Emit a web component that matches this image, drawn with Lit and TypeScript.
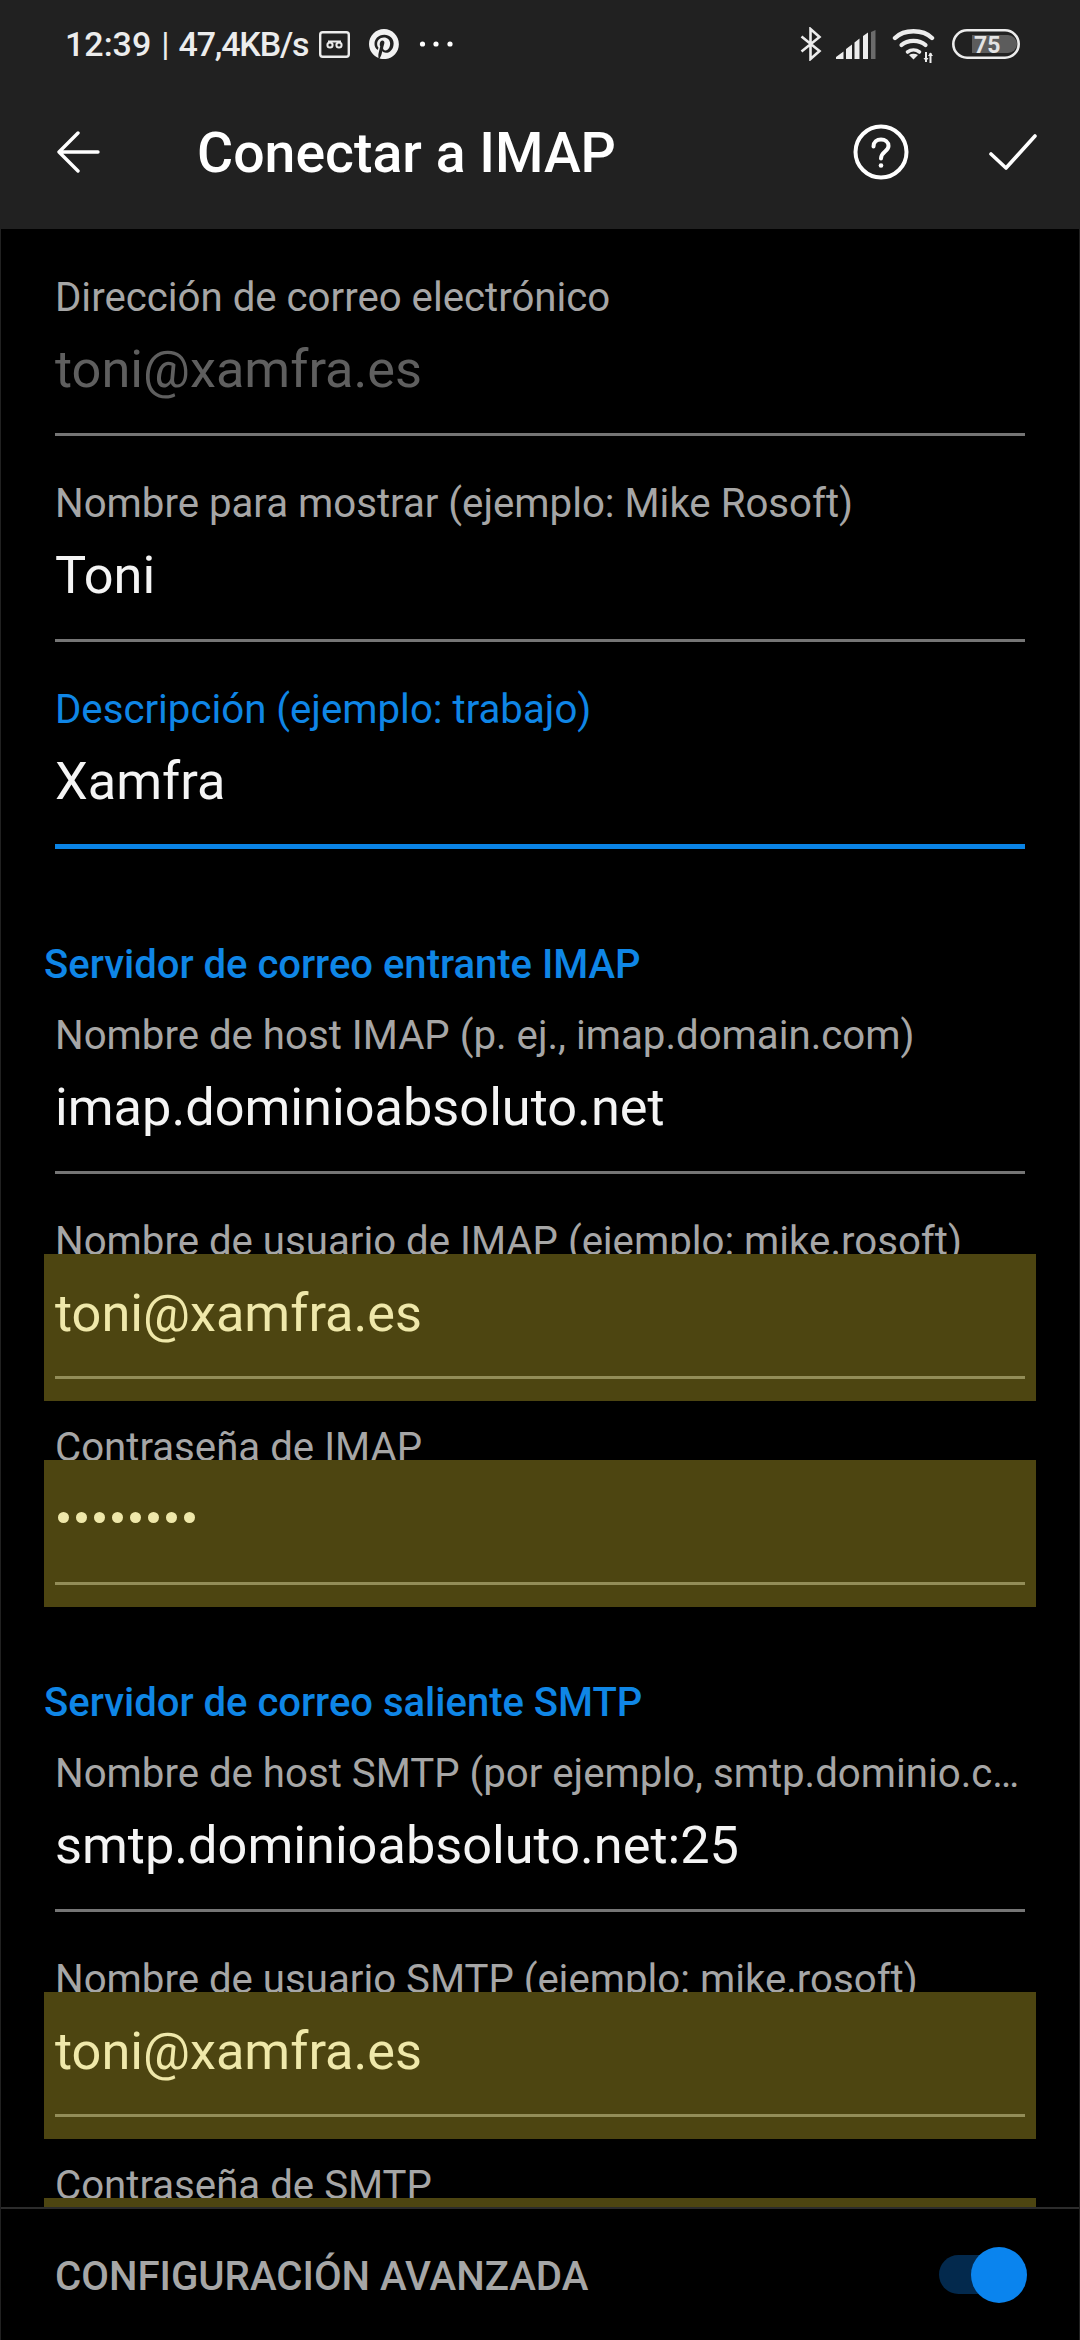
import { LitElement, html, css } from "lit";
import { customElement } from "lit/decorators.js";

type Field = { label: string; value: string; kind?: "dim" | "focus" | "fill" | "pass" };

const ACCOUNT: Field[] = [
  { label: "Dirección de correo electrónico", value: "toni@xamfra.es", kind: "dim" },
  { label: "Nombre para mostrar (ejemplo: Mike Rosoft)", value: "Toni" },
  { label: "Descripción (ejemplo: trabajo)", value: "Xamfra", kind: "focus" },
];
const IMAP: Field[] = [
  { label: "Nombre de host IMAP (p. ej., imap.domain.com)", value: "imap.dominioabsoluto.net" },
  { label: "Nombre de usuario de IMAP (ejemplo: mike.rosoft)", value: "toni@xamfra.es", kind: "fill" },
  { label: "Contraseña de IMAP", value: "••••••••", kind: "pass" },
];
const SMTP: Field[] = [
  { label: "Nombre de host SMTP (por ejemplo, smtp.dominio.c…", value: "smtp.dominioabsoluto.net:25" },
  { label: "Nombre de usuario SMTP (ejemplo: mike.rosoft)", value: "toni@xamfra.es", kind: "fill" },
  { label: "Contraseña de SMTP", value: "••••••••", kind: "pass" },
];

@customElement("app-root")
export class AppRoot extends LitElement {
  static styles = css`
    :host { display: block; width: 1080px; height: 2340px; background: #000; font-family: Roboto, "Liberation Sans", sans-serif; overflow: hidden; }
    .page { width: 1080px; height: 2340px; display: flex; flex-direction: column; }
    .top { background: #212121; height: 229px; flex: none; display: flex; flex-direction: column; }
    .status { height: 88px; flex: none; display: flex; align-items: center; padding: 0 60px 0 65px; color: #ececec; font-size: 34px; font-weight: 500; }
    .status .txt { white-space: pre; }
    .status .sep { white-space: pre; font-weight: 400; margin: 0 9px 0 10px; }
    .status .speed { white-space: pre; letter-spacing: -1.2px; }
    .status svg { display: block; flex: none; }
    .grow { flex: 1; }
    .appbar { flex: 1; display: flex; align-items: center; padding: 0 0 14px 56px; color: #fff; }
    .appbar svg { display: block; flex: none; }
    .title { font-size: 55.4px; font-weight: 500; margin: 3px 0 0 97px; color: #fff; }
    .body { flex: 1; min-height: 0; display: flex; flex-direction: column; border-left: 1px solid #212121; border-right: 1px solid #212121; }
    .scroll { flex: 1; min-height: 0; overflow: hidden; padding-top: 45px; }
    .field { padding: 0 54px; height: 206px; box-sizing: border-box; }
    .label { font-size: 40.2px; line-height: 48px; height: 46px; color: #a6a6a6; white-space: nowrap; }
    .value { font-size: 52.3px; line-height: 60px; color: #f4f4f4; margin-top: 19px; height: 94px; }
    .line { height: 3px; background: #757575; }
    .dim .value { color: #5f5f5f; }
    .focus .label { color: #0f86e6; }
    .focus .line { height: 5px; margin-top: -1px; background: #0a84e6; }
    .section { color: #0f86e6; font-size: 40px; font-weight: 500; line-height: 48px; padding: 0 43px; height: 71px; margin-top: 49px; }
    .fillbox { position: relative; margin: -10px -11px 0; padding: 0 11px; height: 147px; background: #4d4511; box-sizing: border-box; }
    .fillbox .value { color: #efe8aa; margin-top: 0; padding-top: 29px; height: 122px; box-sizing: border-box; }
    .fillbox .line { background: #938d58; }
    .dots { display: flex; gap: 7px; padding: 52px 0 0 3px; height: 122px; box-sizing: border-box; }
    .dots i { width: 11px; height: 11px; border-radius: 50%; background: #efe8aa; display: block; }
    .footer { flex: none; height: 133px; border-top: 2px solid #2c2c2c; box-sizing: border-box; background: #000; display: flex; align-items: center; justify-content: space-between; padding: 0 52px 0 54px; }
    .footer span { color: #a6a6a6; font-size: 40.2px; font-weight: 500; margin-top: 3px; }
    .toggle { position: relative; width: 88px; height: 56px; }
    .track { position: absolute; left: 0; top: 8px; width: 76px; height: 39px; border-radius: 20px; background: #03294d; }
    .thumb { position: absolute; right: 0; top: 0; width: 56px; height: 56px; border-radius: 50%; background: #0a84ee; }
  `;

  private field(f: Field) {
    const k = f.kind ?? "";
    const filled = k === "fill" || k === "pass";
    const dots = html`<div class="dots">${[0, 1, 2, 3, 4, 5, 6, 7].map(() => html`<i></i>`)}</div>`;
    return html`<div class="field ${k}">
      <div class="label">${f.label}</div>
      ${filled
        ? html`<div class="fillbox">
            ${k === "pass" ? dots : html`<div class="value">${f.value}</div>`}
            <div class="line"></div>
          </div>`
        : html`<div class="value">${f.value}</div><div class="line"></div>`}
    </div>`;
  }

  render() {
    return html`<div class="page">
      <div class="top">
        <div class="status">
          <span class="txt">12:39</span><span class="sep">|</span><span class="speed">47,4KB/s</span>
          <svg width="31" height="27" viewBox="0 0 31 27" style="margin-left:11px" fill="none" stroke="#ececec">
            <rect x="1.2" y="1.2" width="28.6" height="24.6" rx="2.5" stroke-width="2.4"/>
            <circle cx="11" cy="14" r="2.6" stroke-width="2"/><circle cx="20" cy="14" r="2.6" stroke-width="2"/>
            <path d="M9 10.5h13" stroke-width="2"/>
          </svg>
          <svg width="30" height="30" viewBox="0 0 24 24" style="margin-left:19px">
            <path fill="#f2f2f2" d="M12 0C5.4 0 0 5.4 0 12c0 5.1 3.2 9.4 7.6 11.2-.1-.9-.2-2.4 0-3.4.2-.9 1.4-5.9 1.4-5.9s-.4-.7-.4-1.8c0-1.7 1-2.9 2.2-2.9 1 0 1.5.8 1.5 1.7 0 1-.7 2.6-1 4-.3 1.2.6 2.2 1.8 2.2 2.1 0 3.8-2.2 3.8-5.5 0-2.9-2.1-4.9-5-4.9-3.4 0-5.4 2.5-5.4 5.2 0 1 .4 2.1.9 2.7.1.1.1.2.1.3l-.3 1.4c-.1.2-.2.3-.4.2-1.5-.7-2.4-2.9-2.4-4.6 0-3.8 2.8-7.3 7.9-7.3 4.2 0 7.4 3 7.4 6.9 0 4.1-2.6 7.5-6.2 7.5-1.2 0-2.4-.6-2.8-1.4l-.8 2.9c-.3 1-1 2.3-1.5 3.1 1.1.3 2.3.5 3.5.5 6.6 0 12-5.4 12-12S18.6 0 12 0z"/>
          </svg>
          <svg width="34" height="8" viewBox="0 0 34 8" style="margin-left:20px" fill="#fff">
            <circle cx="3.5" cy="4" r="2.6"/><circle cx="17" cy="4" r="2.6"/><circle cx="31" cy="4" r="2.6"/>
          </svg>
          <div class="grow"></div>
          <svg width="22" height="34" viewBox="0 0 22 34" fill="none" stroke="#ececec" stroke-width="2.6">
            <path d="M1.5 9.5 19.5 24 10.5 32V2l9 8L1.5 24.5"/>
          </svg>
          <svg width="40" height="30" viewBox="0 0 40 30" style="margin-left:14px;margin-top:2px">
            <path fill="#ececec" d="M0 29v-2l7.5-5.5V29zM10 29V19l6-4.5V29zM18.5 29V12.5l5-4V29zM27 29V6l5-3.5V29z"/>
            <path fill="#6b6b6b" d="M35 29V2l4.5-2v29z"/>
          </svg>
          <svg width="44" height="35" viewBox="0 0 44 35" style="margin-left:16px;margin-top:2px" fill="none" stroke="#ececec" stroke-linecap="round">
            <path d="M3 10C12 1 31 1 40 10" stroke-width="4.4"/>
            <path d="M9.5 17c6-5.5 18-5.5 24 0" stroke-width="4.2"/>
            <path d="M15.5 24c3.5-2.6 8.5-2.6 12 0" stroke-width="3.6"/>
            <path d="M21.5 31.5l-4.5-4.5c2.6-1.6 6.4-1.6 9 0z" fill="#ececec" stroke="none"/>
            <path d="M34 24v10" stroke-width="2" stroke-linecap="butt"/>
            <path d="M38.5 25v10" stroke-width="2" stroke-linecap="butt"/>
            <path d="M31.5 30h5L34 33.5zM36 28h5l-2.5-3.5z" fill="#ececec" stroke="none"/>
          </svg>
          <svg width="68" height="30" viewBox="0 0 68 30" style="margin-left:16px">
            <rect x="1.3" y="1.3" width="65.4" height="27.4" rx="13.7" fill="none" stroke="#ececec" stroke-width="2.6"/>
            <path fill="#5c5c5c" d="M20 6h36a9 9 0 0 1 0 18H20z"/>
            <text x="22" y="23.5" font-family="Roboto, sans-serif" font-size="23" font-weight="700" fill="#e4e4e4">75</text>
          </svg>
        </div>
        <div class="appbar">
          <svg width="44" height="42" viewBox="0 0 44 42" fill="none" stroke="#fff" stroke-width="3.4" stroke-linecap="round" stroke-linejoin="round">
            <path d="M42 21H3M22 2 3 21l19 19"/>
          </svg>
          <div class="title">Conectar a IMAP</div>
          <div class="grow"></div>
          <svg width="56" height="56" viewBox="0 0 56 56" fill="none" stroke="#fff" stroke-width="4" stroke-linecap="round" style="margin-right:79px">
            <circle cx="28" cy="28" r="25.5"/>
            <path d="M20.5 22.5c0-4.5 3.4-7 7.5-7s7.5 2.7 7.5 6.6c0 5.5-7.5 5.6-7.5 12.4"/>
            <circle cx="28" cy="41.5" r="2.3" fill="#fff" stroke="none"/>
          </svg>
          <svg width="50" height="38" viewBox="0 0 50 38" fill="none" stroke="#fff" stroke-width="3.6" stroke-linecap="round" stroke-linejoin="round" style="margin-right:42px">
            <path d="M3 21l15 14L47 3"/>
          </svg>
        </div>
      </div>
      <div class="body">
        <div class="scroll">
          ${ACCOUNT.map((f) => this.field(f))}
          <div class="section">Servidor de correo entrante IMAP</div>
          ${IMAP.map((f) => this.field(f))}
          <div class="section">Servidor de correo saliente SMTP</div>
          ${SMTP.map((f) => this.field(f))}
        </div>
        <div class="footer">
          <span>CONFIGURACIÓN AVANZADA</span>
          <div class="toggle"><div class="track"></div><div class="thumb"></div></div>
        </div>
      </div>
    </div>`;
  }
}
